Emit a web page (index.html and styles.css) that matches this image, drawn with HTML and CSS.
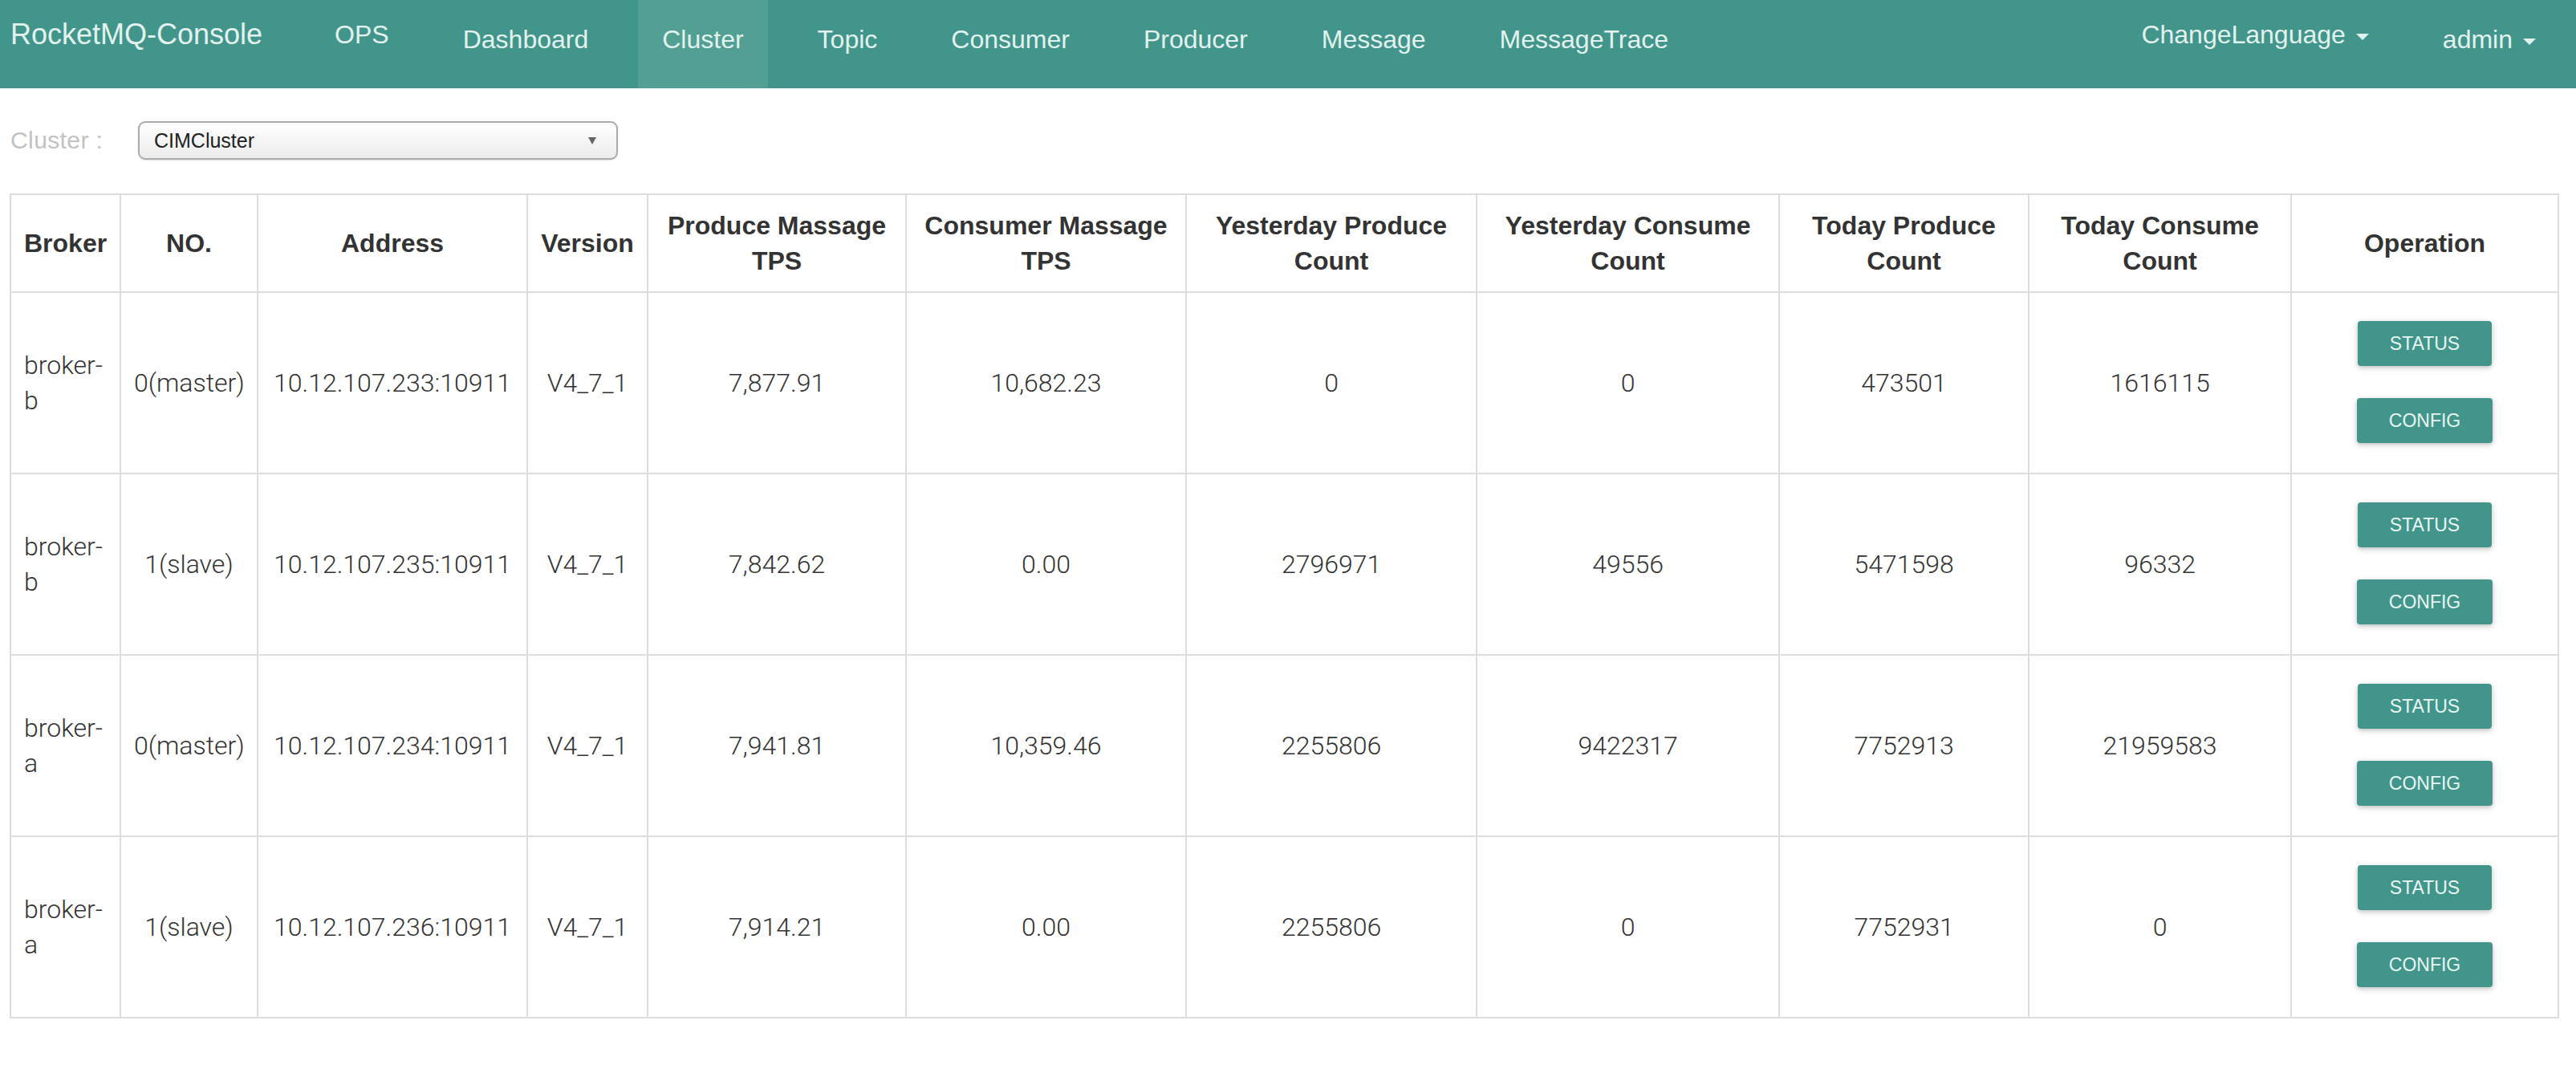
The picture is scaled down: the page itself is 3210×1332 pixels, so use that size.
FILE: index.html
```html
<!DOCTYPE html>
<html lang="en">
<head>
<meta charset="utf-8">
<title>RocketMQ-Console</title>
<link rel="stylesheet" href="styles.css">
</head>
<body>
<nav class="navbar">
  <div class="brand">RocketMQ-Console</div>
  <ul class="nav nav-left">
    <li class="nav-item high"><a>OPS</a></li>
    <li class="nav-item"><a>Dashboard</a></li>
    <li class="nav-item active"><a>Cluster</a></li>
    <li class="nav-item"><a>Topic</a></li>
    <li class="nav-item"><a>Consumer</a></li>
    <li class="nav-item"><a>Producer</a></li>
    <li class="nav-item"><a>Message</a></li>
    <li class="nav-item"><a>MessageTrace</a></li>
  </ul>
  <ul class="nav nav-right">
    <li class="nav-item high"><a>ChangeLanguage<span class="caret"></span></a></li>
    <li class="nav-item"><a>admin<span class="caret"></span></a></li>
  </ul>
</nav>

<div class="toolbar">
  <label class="field-label">Cluster :</label>
  <div class="select">
    <span class="select-value">CIMCluster</span>
    <span class="select-arrow"></span>
  </div>
</div>

<table class="broker-table">
  <colgroup>
    <col class="c-broker"><col class="c-no"><col class="c-addr"><col class="c-ver">
    <col class="c-ptps"><col class="c-ctps"><col class="c-yp"><col class="c-yc">
    <col class="c-tp"><col class="c-tc"><col class="c-op">
  </colgroup>
  <thead>
    <tr>
      <th class="left">Broker</th>
      <th>NO.</th>
      <th>Address</th>
      <th>Version</th>
      <th>Produce Massage TPS</th>
      <th>Consumer Massage TPS</th>
      <th>Yesterday Produce Count</th>
      <th>Yesterday Consume Count</th>
      <th>Today Produce Count</th>
      <th>Today Consume Count</th>
      <th>Operation</th>
    </tr>
  </thead>
  <tbody>
    <tr>
      <td class="left">broker-b</td>
      <td>0(master)</td>
      <td>10.12.107.233:10911</td>
      <td>V4_7_1</td>
      <td>7,877.91</td>
      <td>10,682.23</td>
      <td>0</td>
      <td>0</td>
      <td>473501</td>
      <td>1616115</td>
      <td class="ops"><div class="btns"><button class="btn">STATUS</button><button class="btn">CONFIG</button></div></td>
    </tr>
    <tr>
      <td class="left">broker-b</td>
      <td>1(slave)</td>
      <td>10.12.107.235:10911</td>
      <td>V4_7_1</td>
      <td>7,842.62</td>
      <td>0.00</td>
      <td>2796971</td>
      <td>49556</td>
      <td>5471598</td>
      <td>96332</td>
      <td class="ops"><div class="btns"><button class="btn">STATUS</button><button class="btn">CONFIG</button></div></td>
    </tr>
    <tr>
      <td class="left">broker-a</td>
      <td>0(master)</td>
      <td>10.12.107.234:10911</td>
      <td>V4_7_1</td>
      <td>7,941.81</td>
      <td>10,359.46</td>
      <td>2255806</td>
      <td>9422317</td>
      <td>7752913</td>
      <td>21959583</td>
      <td class="ops"><div class="btns"><button class="btn">STATUS</button><button class="btn">CONFIG</button></div></td>
    </tr>
    <tr>
      <td class="left">broker-a</td>
      <td>1(slave)</td>
      <td>10.12.107.236:10911</td>
      <td>V4_7_1</td>
      <td>7,914.21</td>
      <td>0.00</td>
      <td>2255806</td>
      <td>0</td>
      <td>7752931</td>
      <td>0</td>
      <td class="ops"><div class="btns"><button class="btn">STATUS</button><button class="btn">CONFIG</button></div></td>
    </tr>
  </tbody>
</table>
</body>
</html>
```

FILE: styles.css
```css
* { box-sizing: border-box; }

body {
  margin: 0;
  background: #fff;
  font-family: "Liberation Sans", Arial, Helvetica, sans-serif;
  color: #333;
}

/* ---------- navbar ---------- */
.navbar {
  display: flex;
  height: 110px;
  background: #42958a;
  padding: 0 20px 0 13px;
  color: #e2f2ee;
}

.brand {
  font-size: 36px;
  line-height: 40px;
  padding-top: 23px;
  margin-right: 60px;
  white-space: nowrap;
}

.nav {
  display: flex;
  gap: 32px;
  list-style: none;
  margin: 0;
  padding: 0;
}

.nav-right { margin-left: auto; }

.nav-item a {
  display: block;
  height: 110px;
  padding: 29px 30px 0;
  font-size: 32px;
  line-height: 40px;
  white-space: nowrap;
  color: #e2f2ee;
}

.nav-item.high a { padding-top: 23px; }

.nav-item.active a { background: #52a093; }

.caret {
  display: inline-block;
  width: 0;
  height: 0;
  margin-left: 13px;
  vertical-align: middle;
  border-top: 8px solid #e2f2ee;
  border-left: 8px solid transparent;
  border-right: 8px solid transparent;
}

/* ---------- toolbar ---------- */
.toolbar {
  display: flex;
  align-items: center;
  padding: 41px 0 0 13px;
}

.field-label {
  width: 159px;
  font-size: 30px;
  color: #c2c2c2;
  letter-spacing: 0.4px;
}

.select {
  display: flex;
  align-items: center;
  justify-content: space-between;
  width: 598px;
  height: 48px;
  padding: 0 25px 0 18px;
  border: 2px solid #ababab;
  border-radius: 9px;
  background: linear-gradient(#ffffff, #f6f6f6 45%, #ececec);
  box-shadow: 0 1px 2px rgba(0, 0, 0, 0.12);
}

.select-value {
  font-size: 25px;
  color: #222;
}

.select-arrow {
  width: 0;
  height: 0;
  border-top: 9px solid #666;
  border-left: 5px solid transparent;
  border-right: 5px solid transparent;
}

/* ---------- table ---------- */
.broker-table {
  margin: 42px 0 0 12px;
  width: 3176px;
  table-layout: fixed;
  border-collapse: collapse;
}

.c-broker { width: 137px; }
.c-no { width: 171px; }
.c-addr { width: 336px; }
.c-ver { width: 150px; }
.c-ptps { width: 322px; }
.c-ctps { width: 349px; }
.c-yp { width: 362px; }
.c-yc { width: 377px; }
.c-tp { width: 311px; }
.c-tc { width: 327px; }
.c-op { width: 333px; }

.broker-table th,
.broker-table td {
  border: 2px solid #dddddd;
  padding: 16px;
  text-align: center;
  vertical-align: middle;
  font-size: 32px;
  line-height: 44px;
  color: #333;
}

.broker-table th {
  font-weight: bold;
  font-family: "Liberation Sans", Arial, Helvetica, sans-serif;
  height: 122px;
}

.broker-table td {
  font-family: Roboto, "Liberation Sans", Arial, sans-serif;
  font-weight: 300;
  white-space: normal;
}

.broker-table .left { text-align: left; }

.btns {
  display: flex;
  flex-direction: column;
  align-items: center;
  gap: 40px;
  padding: 19px 0 21px;
}

.btn {
  display: block;
  height: 56px;
  padding: 0 40px;
  border: none;
  border-radius: 4px;
  background: #42958a;
  color: #e8f5f2;
  font-family: "Liberation Sans", Arial, Helvetica, sans-serif;
  font-size: 23px;
  line-height: 56px;
  box-shadow: 0 2px 5px rgba(0, 0, 0, 0.16), 0 2px 10px rgba(0, 0, 0, 0.12);
}
```
